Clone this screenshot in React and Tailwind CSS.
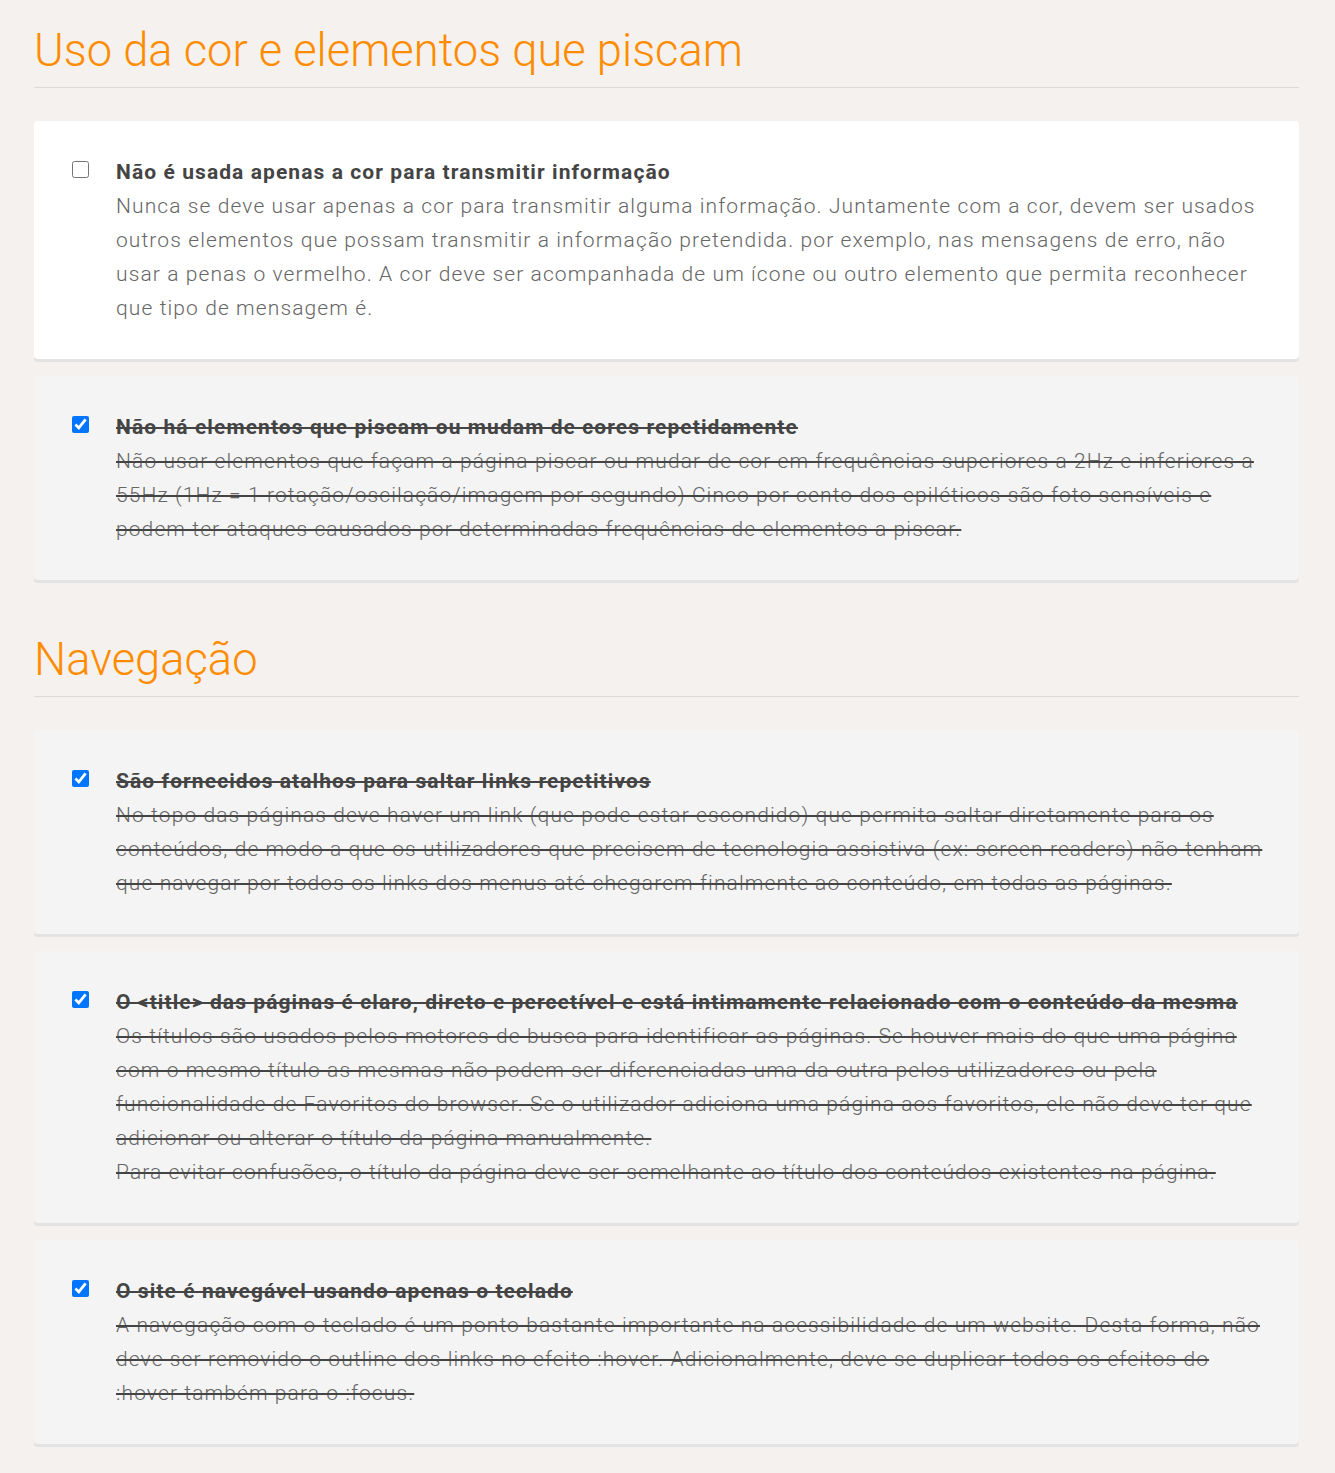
const sections = [
  {
    title: 'Uso da cor e elementos que piscam',
    items: [
      {
        done: false,
        title: 'Não é usada apenas a cor para transmitir informação',
        body: ['Nunca se deve usar apenas a cor para transmitir alguma informação. Juntamente com a cor, devem ser usados outros elementos que possam transmitir a informação pretendida. por exemplo, nas mensagens de erro, não usar a penas o vermelho. A cor deve ser acompanhada de um ícone ou outro elemento que permita reconhecer que tipo de mensagem é.'],
      },
      {
        done: true,
        title: 'Não há elementos que piscam ou mudam de cores repetidamente',
        body: ['Não usar elementos que façam a página piscar ou mudar de cor em frequências superiores a 2Hz e inferiores a 55Hz (1Hz = 1 rotação/oscilação/imagem por segundo) Cinco por cento dos epiléticos são foto sensíveis e podem ter ataques causados por determinadas frequências de elementos a piscar.'],
      },
    ],
  },
  {
    title: 'Navegação',
    items: [
      {
        done: true,
        title: 'São fornecidos atalhos para saltar links repetitivos',
        body: ['No topo das páginas deve haver um link (que pode estar escondido) que permita saltar diretamente para os conteúdos, de modo a que os utilizadores que precisem de tecnologia assistiva (ex: screen readers) não tenham que navegar por todos os links dos menus até chegarem finalmente ao conteúdo, em todas as páginas.'],
      },
      {
        done: true,
        title: 'O <title> das páginas é claro, direto e percetível e está intimamente relacionado com o conteúdo da mesma',
        body: [
          'Os títulos são usados pelos motores de busca para identificar as páginas. Se houver mais do que uma página com o mesmo título as mesmas não podem ser diferenciadas uma da outra pelos utilizadores ou pela funcionalidade de Favoritos do browser. Se o utilizador adiciona uma página aos favoritos, ele não deve ter que adicionar ou alterar o título da página manualmente.',
          'Para evitar confusões, o título da página deve ser semelhante ao título dos conteúdos existentes na página.',
        ],
      },
      {
        done: true,
        title: 'O site é navegável usando apenas o teclado',
        body: ['A navegação com o teclado é um ponto bastante importante na acessibilidade de um website. Desta forma, não deve ser removido o outline dos links no efeito :hover. Adicionalmente, deve se duplicar todos os efeitos do :hover também para o :focus.'],
      },
    ],
  },
]

function Item({ item }){
  return (
    <li className={`flex rounded-[4px] pl-[38px] pr-[31px] py-[34px] shadow-[0_3px_0_#e3e3e3] ${item.done ? 'bg-[#f4f4f4]' : 'bg-white'}`}>
      <input type="checkbox" defaultChecked={item.done} className="w-[17px] h-[17px] mt-[6px] mr-[27px] shrink-0" />
      <div className={`text-[#444] leading-[34px] ${item.done ? 'line-through' : ''}`}>
        <div className="text-[21px] font-bold tracking-[1.08px]">{item.title}</div>
        {item.body.map((p, i) => (
          <div key={i} className="text-[21px] font-light tracking-[1.1px] text-[#666]">{p}</div>
        ))}
      </div>
    </li>
  )
}

export default function App(){
  return (
    <div className="min-h-screen bg-[#f4f1ee] pl-[34px] pr-[36px] pb-[28px] font-['Roboto',sans-serif]">
      {sections.map((s, i) => (
        <section key={i} className={i > 0 ? 'mt-[29px]' : ''}>
          <h2 className="pt-[26px] pb-[11px] text-[45.3px] font-light leading-[50px] text-[#ff8c00] border-b border-[#dddad7] mb-[33px]">{s.title}</h2>
          <ul className="flex flex-col gap-[17px]">
            {s.items.map((it, j) => <Item key={j} item={it} />)}
          </ul>
        </section>
      ))}
    </div>
  )
}
